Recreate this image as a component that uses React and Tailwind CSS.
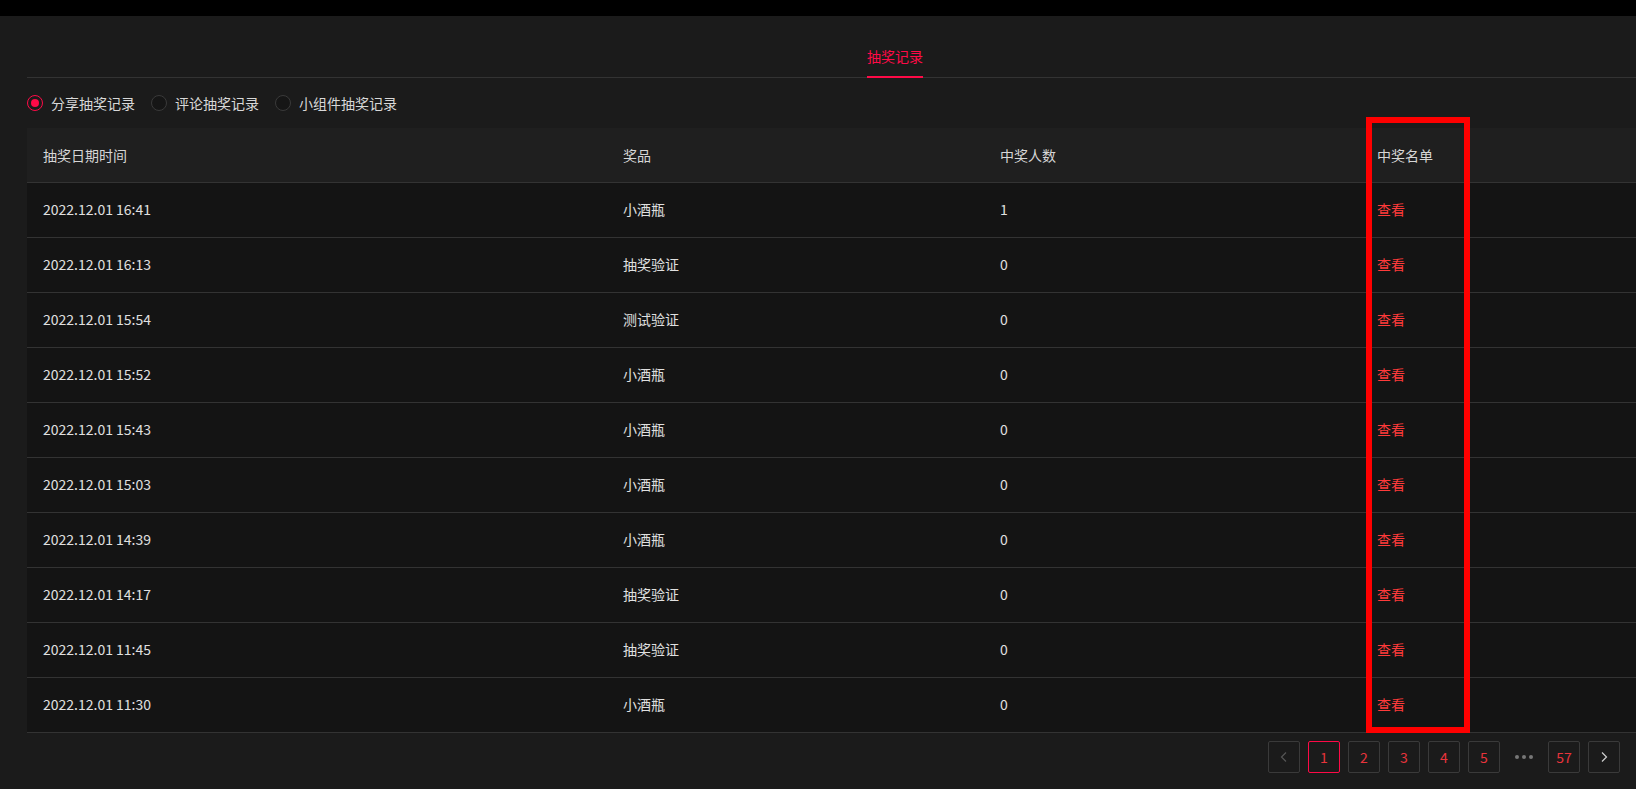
import React from "react";

const rows = [
  ["2022.12.01 16:41", "小酒瓶", "1"],
  ["2022.12.01 16:13", "抽奖验证", "0"],
  ["2022.12.01 15:54", "测试验证", "0"],
  ["2022.12.01 15:52", "小酒瓶", "0"],
  ["2022.12.01 15:43", "小酒瓶", "0"],
  ["2022.12.01 15:03", "小酒瓶", "0"],
  ["2022.12.01 14:39", "小酒瓶", "0"],
  ["2022.12.01 14:17", "抽奖验证", "0"],
  ["2022.12.01 11:45", "抽奖验证", "0"],
  ["2022.12.01 11:30", "小酒瓶", "0"],
];

function Radio({ checked, label }) {
  return (
    <div className="flex items-center gap-2">
      <span
        className={
          checked
            ? "w-4 h-4 rounded-full border border-[#ff0a47] flex items-center justify-center"
            : "w-4 h-4 rounded-full border border-[#3a3a3a] bg-[#161616]"
        }
      >
        {checked && <span className="w-2 h-2 rounded-full bg-[#ff0a47]" />}
      </span>
      <span className="text-[14px] leading-[22px] text-[#d8d8d8]">{label}</span>
    </div>
  );
}

function PageBtn({ children, active }) {
  return (
    <div
      className={
        "w-8 h-8 rounded-[2px] border flex items-center justify-center text-[14px] text-[#e8343c] " +
        (active ? "border-[#ff0a47]" : "border-[#3a3a3a]")
      }
    >
      {children}
    </div>
  );
}

export default function App() {
  return (
    <div
      className="relative w-[1636px] h-[789px] overflow-hidden bg-[#1b1b1b]"
      style={{ fontFamily: '"Noto Sans CJK SC", "Noto Sans", sans-serif' }}
    >
      <div className="h-4 bg-black" />
      <div className="pl-[27px]">
        {/* tabs */}
        <div className="h-[62px] flex items-end border-b border-[#333333]">
          <div className="ml-[840px] -mb-px pb-[9px] border-b-2 border-[#ff0a47]">
            <span className="block text-[14px] leading-[22px] text-[#ff0a47] w-[56px] text-center">
              抽奖记录
            </span>
          </div>
        </div>
        {/* radios */}
        <div className="h-[50px] flex items-center gap-4">
          <Radio checked label="分享抽奖记录" />
          <Radio label="评论抽奖记录" />
          <Radio label="小组件抽奖记录" />
        </div>
        {/* table */}
        <div className="text-[14px] leading-[20px]">
          <div className="grid grid-cols-[580px_377px_377px_1fr] h-[55px] items-center bg-[#1f1f1f] border-b border-[#333333] text-[#d6d6d6]">
            <div className="pl-4">抽奖日期时间</div>
            <div className="pl-4">奖品</div>
            <div className="pl-4">中奖人数</div>
            <div className="pl-4">中奖名单</div>
          </div>
          {rows.map((r, i) => (
            <div
              key={i}
              className="grid grid-cols-[580px_377px_377px_1fr] h-[55px] items-center bg-[#141414] border-b border-[#333333] text-[#e0e0e0]"
            >
              <div className="pl-4 pb-[2px]">{r[0]}</div>
              <div className="pl-4 pb-[2px]">{r[1]}</div>
              <div className="pl-4 pb-[2px]">{r[2]}</div>
              <div className="pl-4 pb-[2px] text-[#ff3b3b]">查看</div>
            </div>
          ))}
        </div>
        {/* pagination */}
        <div className="flex justify-end pr-4 mt-2 gap-2">
          <div className="w-8 h-8 rounded-[2px] border border-[#3a3a3a] flex items-center justify-center">
            <svg width="12" height="12" viewBox="0 0 12 12" fill="none">
              <path d="M8 1.5 L3.5 6 L8 10.5" stroke="#555" strokeWidth="1.2" />
            </svg>
          </div>
          <PageBtn active>1</PageBtn>
          <PageBtn>2</PageBtn>
          <PageBtn>3</PageBtn>
          <PageBtn>4</PageBtn>
          <PageBtn>5</PageBtn>
          <div className="w-8 h-8 flex items-center justify-center gap-[3px]">
            <span className="w-1 h-1 rounded-full bg-[#777]" />
            <span className="w-1 h-1 rounded-full bg-[#777]" />
            <span className="w-1 h-1 rounded-full bg-[#777]" />
          </div>
          <PageBtn>57</PageBtn>
          <div className="w-8 h-8 rounded-[2px] border border-[#3a3a3a] flex items-center justify-center">
            <svg width="12" height="12" viewBox="0 0 12 12" fill="none">
              <path d="M4 1.5 L8.5 6 L4 10.5" stroke="#d0d0d0" strokeWidth="1.2" />
            </svg>
          </div>
        </div>
      </div>
      {/* highlight box */}
      <div className="absolute left-[1366px] top-[117px] w-[104px] h-[616px] border-[6px] border-[#ff0000]" />
    </div>
  );
}
